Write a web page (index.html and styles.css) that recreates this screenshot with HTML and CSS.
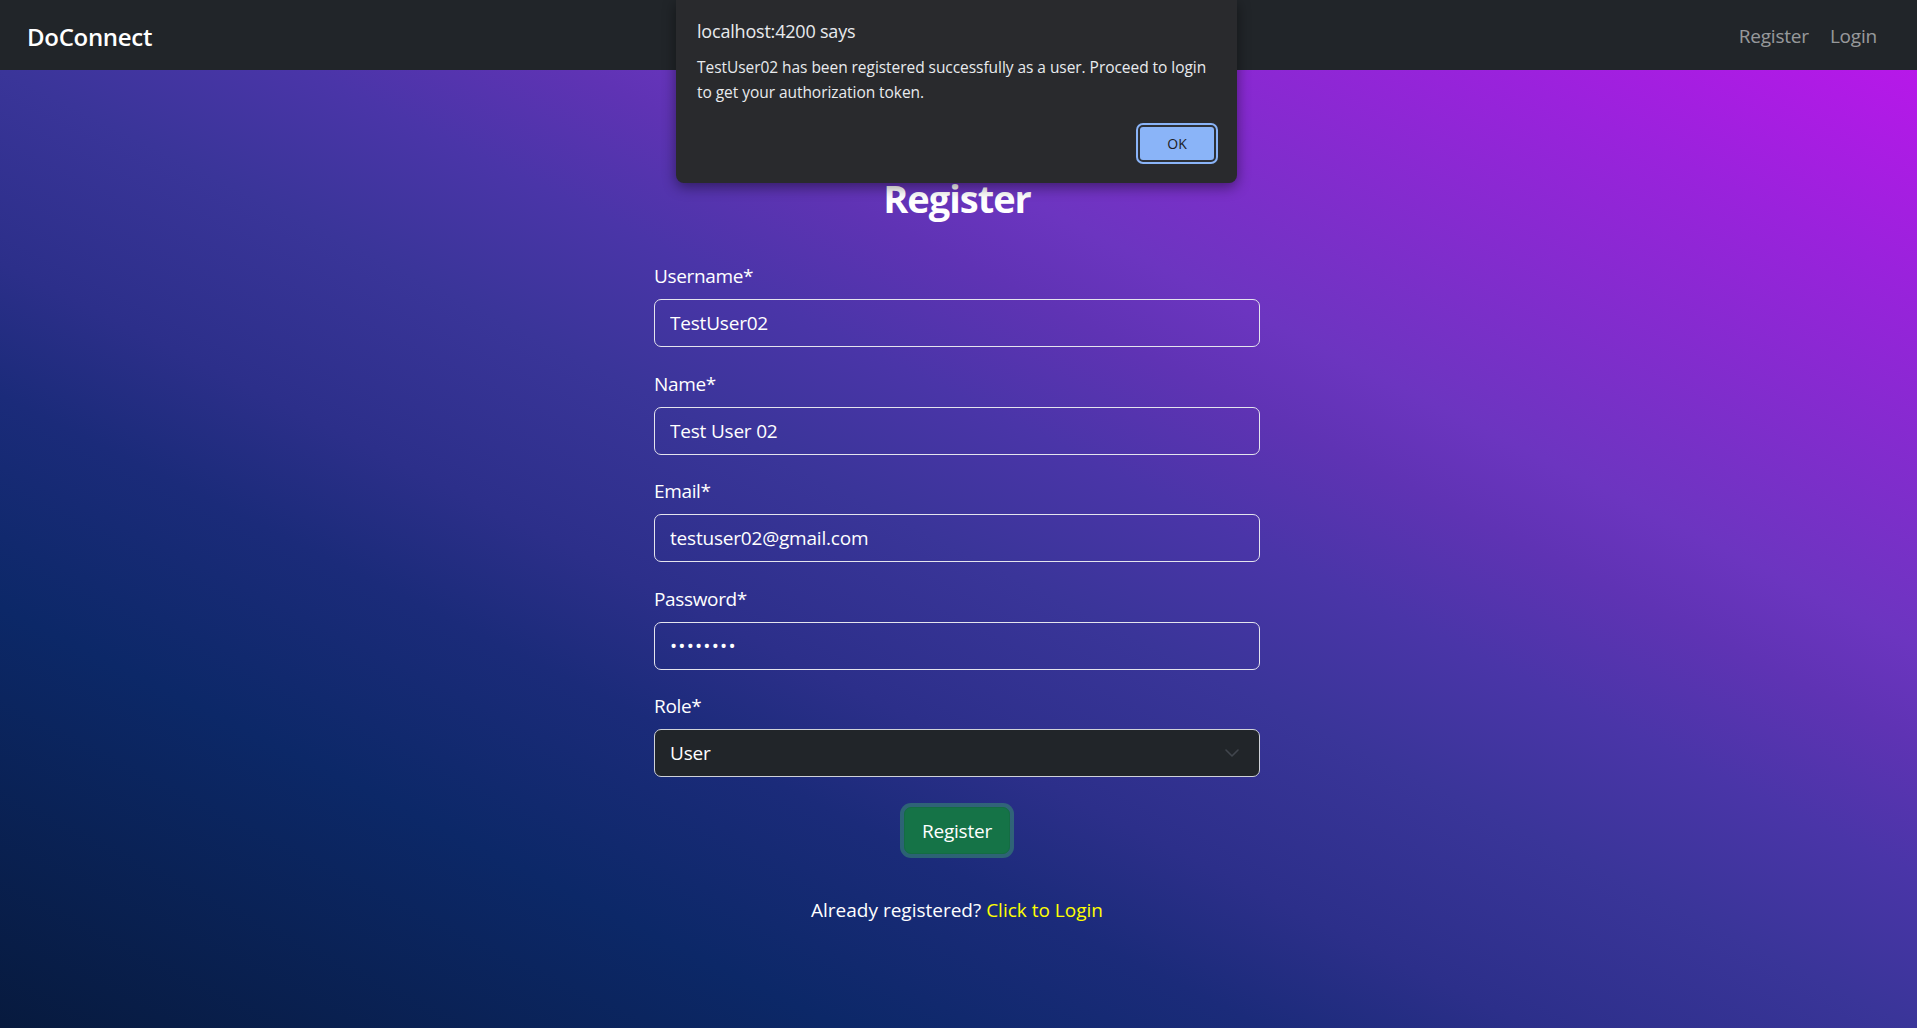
FILE: index.html
```html
<!DOCTYPE html>
<html lang="en">
<head>
<meta charset="utf-8">
<title>DoConnect</title>
<link rel="stylesheet" href="styles.css">
</head>
<body>
<header class="navbar">
  <a class="brand" href="#">DoConnect</a>
  <nav class="nav">
    <a class="nav-link" href="#">Register</a>
    <a class="nav-link" href="#">Login</a>
  </nav>
</header>

<main class="page">
  <h1 class="title">Register</h1>
  <form class="form">
    <div class="field">
      <label class="label">Username*</label>
      <input class="control" type="text" value="TestUser02">
    </div>
    <div class="field">
      <label class="label">Name*</label>
      <input class="control" type="text" value="Test User 02">
    </div>
    <div class="field">
      <label class="label">Email*</label>
      <input class="control" type="text" value="testuser02@gmail.com">
    </div>
    <div class="field">
      <label class="label">Password*</label>
      <input class="control password" type="password" value="password">
    </div>
    <div class="field">
      <label class="label">Role*</label>
      <div class="select-wrap">
        <select class="control select">
          <option>User</option>
          <option>Admin</option>
        </select>
        <svg class="chevron" width="14" height="8" viewBox="0 0 14 8"><path d="M1 1l6 6 6-6" fill="none" stroke="#41464d" stroke-width="1.6" stroke-linecap="round" stroke-linejoin="round"/></svg>
      </div>
    </div>
    <div class="actions">
      <button type="button" class="btn-success">Register</button>
    </div>
    <p class="switch">Already registered? <a href="#" class="switch-link">Click to Login</a></p>
  </form>
</main>

<div class="dialog">
  <div class="dialog-title">localhost:4200 says</div>
  <div class="dialog-msg">TestUser02 has been registered successfully as a user. Proceed to login to get your authorization token.</div>
  <div class="dialog-actions">
    <button type="button" class="dialog-ok">OK</button>
  </div>
</div>
</body>
</html>
```

FILE: styles.css
```css
* { box-sizing: border-box; }

html, body {
  margin: 0;
  padding: 0;
  height: 100%;
}

body {
  font-family: "Open Sans", "Noto Sans", "Liberation Sans", sans-serif;
  color: #fff;
  background: #212529;
  overflow: hidden;
}

.navbar {
  height: 70px;
  background: #212529;
  display: flex;
  align-items: center;
  justify-content: space-between;
  padding: 2px 40px 0 27px;
}

.brand {
  color: #fff;
  text-decoration: none;
  font-size: 24px;
  font-weight: 600;
  letter-spacing: -0.3px;
}

.nav {
  display: flex;
  gap: 21px;
}

.nav-link {
  color: rgba(255, 255, 255, 0.55);
  text-decoration: none;
  font-size: 19px;
  letter-spacing: -0.2px;
}

.page {
  height: calc(100vh - 70px);
  padding: 104px 3px 0 0;
  background: linear-gradient(to top right,
    #071a3e 0%,
    #0c2868 22%,
    #1b2b7a 33%,
    #2c2f8a 40%,
    #3a3599 50%,
    #4a35a8 58%,
    #5f33b4 65%,
    #6c35c0 70%,
    #9a22dc 89%,
    #b718e9 100%);
}

.title {
  margin: 0 0 39px;
  text-align: center;
  font-size: 38px;
  line-height: 48px;
  font-weight: 700;
  letter-spacing: -1px;
}

.form {
  width: 606px;
  margin: 0 auto;
}

.field {
  margin-bottom: 21.6px;
}

.label {
  display: block;
  font-size: 19px;
  line-height: 30px;
  margin-bottom: 8px;
  letter-spacing: -0.35px;
}

.control {
  display: block;
  width: 100%;
  height: 48px;
  padding: 0 15px;
  font-family: inherit;
  font-size: 19px;
  letter-spacing: -0.2px;
  color: #fff;
  background: transparent;
  border: 1px solid #e4e4ee;
  border-radius: 7px;
  outline: none;
}

.password {
  letter-spacing: 1.2px;
}

.select-wrap {
  position: relative;
}

.select {
  appearance: none;
  -webkit-appearance: none;
  background: #212529;
  border-color: #cfd2d8;
}

.chevron {
  position: absolute;
  right: 21px;
  top: 20px;
}

.actions {
  display: flex;
  justify-content: center;
  margin-top: 30px;
}

.btn-success {
  height: 47px;
  padding: 0 17px;
  font-family: inherit;
  font-size: 19px;
  letter-spacing: -0.2px;
  color: #fff;
  background: #157347;
  border: 1px solid #146c43;
  border-radius: 7px;
  box-shadow: 0 0 0 4px rgba(60, 153, 110, 0.5);
}

.switch {
  margin: 41px 0 0;
  text-align: center;
  font-size: 19px;
  line-height: 30px;
  letter-spacing: 0;
}

.switch-link {
  color: #ffff00;
  text-decoration: none;
}

.dialog {
  position: absolute;
  top: 0;
  left: 676px;
  width: 561px;
  height: 183px;
  padding: 19px 19px 19px 21px;
  background: #292a2d;
  border-radius: 0 0 8px 8px;
  box-shadow: 0 4px 14px rgba(0, 0, 0, 0.45);
  color: #e8eaed;
  display: flex;
  flex-direction: column;
}

.dialog-title {
  font-size: 18px;
  line-height: 24px;
  letter-spacing: -0.2px;
}

.dialog-msg {
  margin-top: 12px;
  font-size: 15.5px;
  line-height: 25px;
  letter-spacing: -0.05px;
}

.dialog-actions {
  margin-top: auto;
  display: flex;
  justify-content: flex-end;
}

.dialog-ok {
  width: 78px;
  height: 37px;
  margin: 2px;
  font-family: inherit;
  font-size: 14px;
  color: #202124;
  background: #8ab4f8;
  border: 2px solid #2d3138;
  border-radius: 5px;
  box-shadow: 0 0 0 2px #8ab4f8;
}
```
